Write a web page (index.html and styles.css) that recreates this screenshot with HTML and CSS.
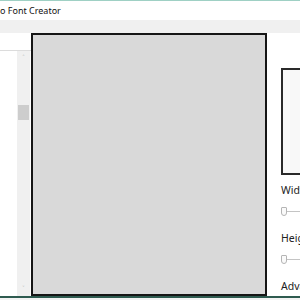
FILE: index.html
```html
<!DOCTYPE html>
<html lang="en">
<head>
    <meta charset="UTF-8">
    <title>Font Creator</title>
    <link rel="stylesheet" href="styles.css">
</head>
<body>
    <div class="window">
        <div class="titlebar">o Font Creator</div>
        <div class="menubar"></div>

        <div class="main">
            <!-- glyph list -->
            <div class="left-panel">
                <div class="search"></div>
                <div class="list-area">
                    <div class="list"></div>
                    <div class="scrollbar">
                        <span class="arrow">&#708;</span>
                        <div class="thumb"></div>
                        <span class="arrow arrow-down">&#709;</span>
                    </div>
                </div>
            </div>

            <!-- drawing canvas -->
            <div class="canvas"></div>

            <!-- properties -->
            <div class="right-panel">
                <div class="preview"></div>
                <div class="label">Width</div>
                <div class="slider"><span class="thumb-handle"></span><span class="track"></span></div>
                <div class="label">Height</div>
                <div class="slider"><span class="thumb-handle"></span><span class="track"></span></div>
                <div class="label">Advance</div>
            </div>
        </div>
    </div>
</body>
</html>
```

FILE: styles.css
```css
body {
    margin: 0;
    width: 300px;
    height: 300px;
    overflow: hidden;
    background: #f3f3f3;
    font-family: "Noto Sans", "Open Sans", sans-serif;
}
.window {
    border-top: 1px solid #9fd0c4;
    border-bottom: 2px solid #2e5b50;
    background: white;
    height: 295px;
}
.titlebar {
    height: 19px;
    line-height: 19px;
    font-size: 9px;
    color: #111;
}
.menubar {
    height: 13px;
    background: #f0f0f0;
}
.main {
    display: flex;
    height: 263px;
}
.left-panel {
    width: 31px;
    display: flex;
    flex-direction: column;
}
.search {
    height: 17px;
    border-bottom: 1px solid #dcdcdc;
}
.list-area {
    flex: 1;
    display: flex;
}
.list {
    width: 17px;
}
.scrollbar {
    width: 13px;
    background: #f0f0f0;
    display: flex;
    flex-direction: column;
    align-items: center;
}
.scrollbar .arrow {
    font-size: 7px;
    color: #a8a8a8;
    line-height: 10px;
    margin-top: 2px;
}
.scrollbar .arrow-down {
    margin-top: auto;
    margin-bottom: 2px;
}
.scrollbar .thumb {
    width: 11px;
    height: 15px;
    background: #cdcdcd;
    margin-top: 42px;
}
.canvas {
    width: 232px;
    border: 2px solid #151515;
    background: #d9d9d9;
}
.right-panel {
    flex: 1;
    padding-left: 14px;
    overflow: hidden;
    display: flex;
    flex-direction: column;
}
.preview {
    width: 60px;
    height: 103px;
    margin-top: 35px;
    border: 2px solid #2a2a2a;
    background: #f8f8f8;
    flex-shrink: 0;
}
.label {
    font-size: 10.5px;
    color: #222;
    margin-top: 8px;
    line-height: 14px;
    white-space: nowrap;
}
.slider {
    display: flex;
    align-items: center;
    height: 10px;
    margin-top: 9px;
    margin-bottom: 7px;
}
.thumb-handle {
    width: 4px;
    height: 7px;
    border: 1px solid #b5b5b5;
    border-radius: 1px 1px 3px 3px;
    background: #fafafa;
    flex-shrink: 0;
}
.track {
    width: 40px;
    height: 1px;
    background: #c4c4c4;
}
```
